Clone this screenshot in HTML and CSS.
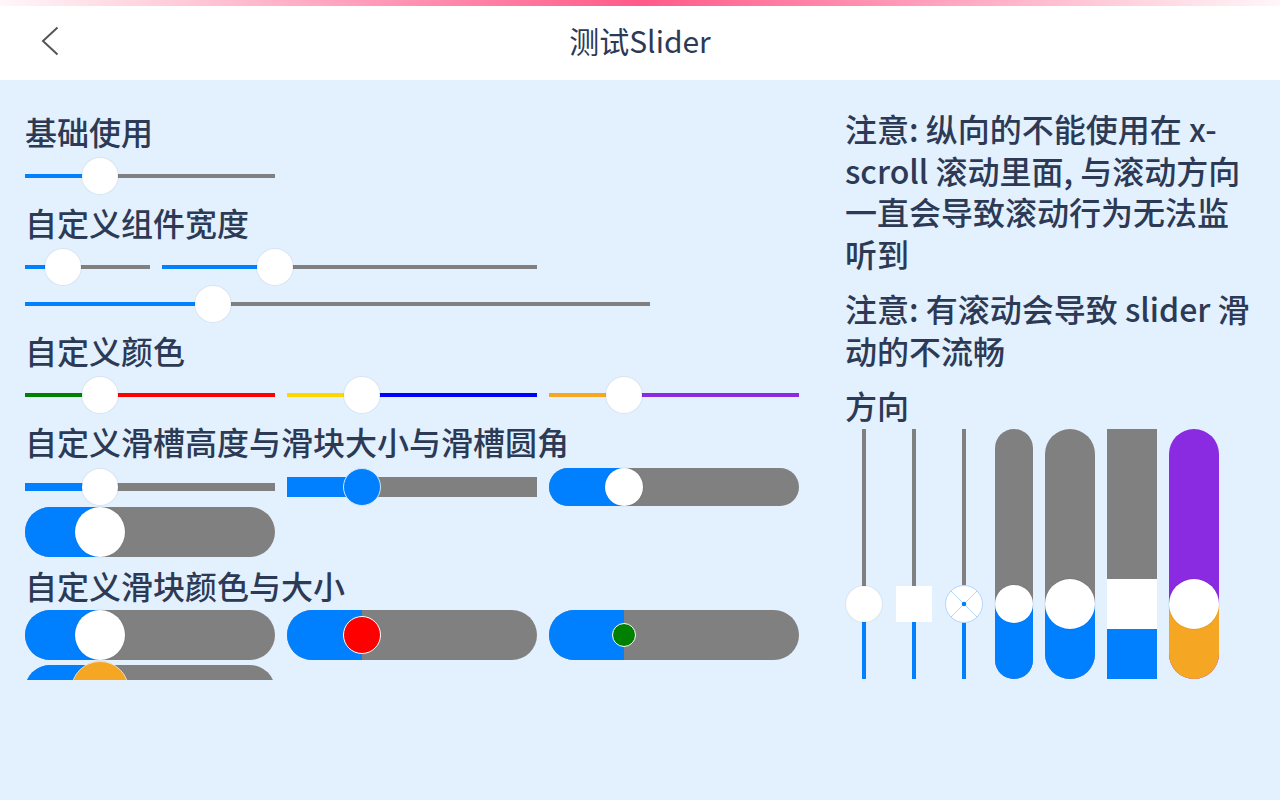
FILE: index.html
```html
<!DOCTYPE html>
<html lang="zh-CN">
<head>
  <meta charset="UTF-8" />
  <meta name="viewport" content="width=device-width, initial-scale=1" />
  <title>测试Slider</title>
  <link rel="stylesheet" href="styles.css">
</head>
<body>
  <header class="navbar">
    <div class="nav-left">
      <svg class="back" width="20" height="32" viewBox="0 0 20 32">
        <polyline points="17.5,2.5 3,16 17.5,29.5" fill="none" stroke="#555" stroke-width="2" />
      </svg>
    </div>
    <div class="nav-title">测试Slider</div>
    <div></div>
  </header>

  <main class="page">
    <section class="col-left">
      <h2 class="title">基础使用</h2>
      <div class="row">
        <div class="slider w250 h36">
          <div class="track t4"><div class="fill"></div></div>
          <div class="thumb k36"></div>
        </div>
      </div>

      <h2 class="title">自定义组件宽度</h2>
      <div class="row">
        <div class="slider w125 h36">
          <div class="track t4"><div class="fill"></div></div>
          <div class="thumb k36"></div>
        </div>
        <div class="slider w375 h36">
          <div class="track t4"><div class="fill"></div></div>
          <div class="thumb k36"></div>
        </div>
      </div>
      <div class="row">
        <div class="slider w625 h36">
          <div class="track t4"><div class="fill"></div></div>
          <div class="thumb k36"></div>
        </div>
      </div>

      <h2 class="title">自定义颜色</h2>
      <div class="row">
        <div class="slider w250 h36">
          <div class="track t4 bg-red"><div class="fill bg-green"></div></div>
          <div class="thumb k36"></div>
        </div>
        <div class="slider w250 h36">
          <div class="track t4 bg-blue"><div class="fill bg-gold"></div></div>
          <div class="thumb k36"></div>
        </div>
        <div class="slider w250 h36">
          <div class="track t4 bg-purple"><div class="fill bg-orange"></div></div>
          <div class="thumb k36"></div>
        </div>
      </div>

      <h2 class="title">自定义滑槽高度与滑块大小与滑槽圆角</h2>
      <div class="row">
        <div class="slider w250 h36">
          <div class="track t8"><div class="fill"></div></div>
          <div class="thumb k36"></div>
        </div>
        <div class="slider w250 h38">
          <div class="track t20"><div class="fill"></div></div>
          <div class="thumb k38 thumb-blue"></div>
        </div>
        <div class="slider w250 h38">
          <div class="track t38 round"><div class="fill"></div></div>
          <div class="thumb k38"></div>
        </div>
      </div>
      <div class="row">
        <div class="slider w250 h50">
          <div class="track t50 round"><div class="fill"></div></div>
          <div class="thumb k50"></div>
        </div>
      </div>

      <h2 class="title tight">自定义滑块颜色与大小</h2>
      <div class="row">
        <div class="slider w250 h50">
          <div class="track t50 round"><div class="fill"></div></div>
          <div class="thumb k50"></div>
        </div>
        <div class="slider w250 h50">
          <div class="track t50 round"><div class="fill"></div></div>
          <div class="thumb k38 thumb-red"></div>
        </div>
        <div class="slider w250 h50">
          <div class="track t50 round"><div class="fill"></div></div>
          <div class="thumb k24 thumb-green"></div>
        </div>
      </div>
      <div class="row">
        <div class="slider w250 h58">
          <div class="track t50 round"><div class="fill"></div></div>
          <div class="thumb k58 thumb-orange"></div>
        </div>
      </div>
    </section>

    <section class="col-right">
      <p class="note">注意: 纵向的不能使用在 x-scroll 滚动里面, 与滚动方向一直会导致滚动行为无法监听到</p>
      <p class="note">注意: 有滚动会导致 slider 滑动的不流畅</p>
      <h2 class="title dir-title">方向</h2>

      <div class="vrow">
        <div class="vslider v38">
          <div class="vtrack t4"><div class="vfill"></div></div>
          <div class="vthumb k36"></div>
        </div>
        <div class="vslider v38">
          <div class="vtrack t4"><div class="vfill"></div></div>
          <div class="vthumb k36 square"></div>
        </div>
        <div class="vslider v38">
          <div class="vtrack t4"><div class="vfill"></div></div>
          <div class="vthumb k38 cross">
            <svg width="38" height="38" viewBox="0 0 38 38">
              <circle cx="19" cy="19" r="18.5" fill="#fff" stroke="#b4d6fb" stroke-width="1" />
              <line x1="6" y1="6" x2="32" y2="32" stroke="#b4d6fb" stroke-width="1" />
              <line x1="32" y1="6" x2="6" y2="32" stroke="#b4d6fb" stroke-width="1" />
              <circle cx="19" cy="19" r="2.3" fill="#0080ff" />
            </svg>
          </div>
        </div>
        <div class="vslider v38">
          <div class="vtrack t38 round"><div class="vfill"></div></div>
          <div class="vthumb k38"></div>
        </div>
        <div class="vslider v50">
          <div class="vtrack t50 round"><div class="vfill"></div></div>
          <div class="vthumb k50"></div>
        </div>
        <div class="vslider v50">
          <div class="vtrack t50"><div class="vfill"></div></div>
          <div class="vthumb k50 square"></div>
        </div>
        <div class="vslider v50">
          <div class="vtrack t50 round bg-purple"><div class="vfill bg-orange"></div></div>
          <div class="vthumb k50"></div>
        </div>
      </div>
    </section>
  </main>
</body>
</html>
```

FILE: styles.css
```css
:root {
  --text: #2c3a55;
  --bg: #e3f0fe;
  --active: #0080ff;
  --rail: #808080;
}

html, body {
  margin: 0;
  height: 100%;
}

body {
  background: var(--bg);
  font-family: "Noto Sans CJK SC", sans-serif;
  color: var(--text);
}

/* top bar */
.navbar {
  height: 80px;
  display: grid;
  grid-template-columns: 1fr auto 1fr;
  align-items: center;
  background:
    linear-gradient(90deg, rgba(255, 90, 138, 0.05) 0%, #ff5a8a 50%, rgba(255, 90, 138, 0.05) 100%) top / 100% 6px no-repeat,
    #fff;
}

.nav-left {
  padding-left: 40px;
  display: flex;
  align-items: center;
}

.back {
  display: block;
  margin-top: 1px;
}

.nav-title {
  font-size: 30px;
  line-height: 40px;
}

/* content */
.page {
  height: 600px;
  overflow: hidden;
  box-sizing: border-box;
  padding: 23px 25px 0;
  display: grid;
  grid-template-columns: 775px 410px;
  column-gap: 45px;
  align-items: start;
}

.col-left {
  display: flex;
  flex-direction: column;
  align-items: flex-start;
}

.title {
  margin: 8px 0 7px;
  font-size: 32px;
  line-height: 40px;
  font-weight: 500;
  white-space: nowrap;
}

.title.tight {
  margin-bottom: 5px;
}

.col-left .row + .row {
  margin-top: 1px;
}

.row {
  display: flex;
  align-items: center;
  gap: 12px;
}

.slider {
  position: relative;
  display: flex;
  align-items: center;
}

.track {
  width: 100%;
  background: var(--rail);
  overflow: hidden;
}

.fill {
  width: 30%;
  height: 100%;
  background: var(--active);
}

.thumb {
  position: absolute;
  top: 50%;
  left: 30%;
  transform: translate(-50%, -50%);
  box-sizing: border-box;
  border-radius: 50%;
  background: #fff;
  box-shadow: 0 0 0 1px rgba(0, 0, 0, 0.05);
}

.round { border-radius: 999px; }

.w125 { width: 125px; }
.w250 { width: 250px; }
.w375 { width: 375px; }
.w625 { width: 625px; }

.h36 { height: 36px; }
.h38 { height: 38px; }
.h50 { height: 50px; }
.h58 { height: 58px; }

.slider .t4 { height: 4px; }
.slider .t8 { height: 8px; }
.slider .t20 { height: 20px; }
.slider .t38 { height: 38px; }
.slider .t50 { height: 50px; }

.k24 { width: 24px; height: 24px; }
.k36 { width: 36px; height: 36px; }
.k38 { width: 38px; height: 38px; }
.k50 { width: 50px; height: 50px; }
.k58 { width: 58px; height: 58px; }

.thumb-blue {
  background: var(--active);
  border: 1px solid #cfe4fb;
  box-shadow: none;
}

.thumb-red {
  background: #ff0000;
  border: 1px solid #fff;
  box-shadow: none;
}

.thumb-green {
  background: #008000;
  border: 1px solid #fff;
  box-shadow: none;
}

.thumb-orange {
  background: #f5a623;
  border: 1px solid #f3dcb6;
  box-shadow: none;
}

/* right column */
.note {
  margin: 0 0 14px;
  font-size: 32px;
  line-height: 41.5px;
  font-weight: 500;
}

.note:first-child {
  margin-top: 5px;
}

.dir-title {
  margin: 0 0 2px;
  line-height: 41.5px;
}

.vrow {
  display: flex;
  gap: 12px;
  height: 250px;
}

.vslider {
  position: relative;
  height: 250px;
  display: flex;
  justify-content: center;
}

.v38 { width: 38px; }
.v50 { width: 50px; }

.vtrack {
  height: 100%;
  background: var(--rail);
  overflow: hidden;
  display: flex;
  flex-direction: column;
  justify-content: flex-end;
}

.vtrack.t4 { width: 4px; }
.vtrack.t38 { width: 38px; }
.vtrack.t50 { width: 50px; }

.vfill {
  height: 30%;
  background: var(--active);
}

.vthumb {
  position: absolute;
  left: 50%;
  bottom: 30%;
  transform: translate(-50%, 50%);
  border-radius: 50%;
  background: #fff;
  box-shadow: 0 0 0 1px rgba(0, 0, 0, 0.05);
}

.vthumb.square {
  border-radius: 0;
  box-shadow: none;
}

.vthumb.cross {
  background: none;
  box-shadow: none;
}

.vthumb.cross svg {
  display: block;
}

/* custom colours, after the base track rules */
.track.bg-red { background: #ff0000; }
.fill.bg-green { background: #008000; }
.track.bg-blue { background: #0000ff; }
.fill.bg-gold { background: #ffd700; }
.track.bg-purple,
.vtrack.bg-purple { background: #8a2be2; }
.fill.bg-orange,
.vfill.bg-orange { background: #f5a623; }
```
